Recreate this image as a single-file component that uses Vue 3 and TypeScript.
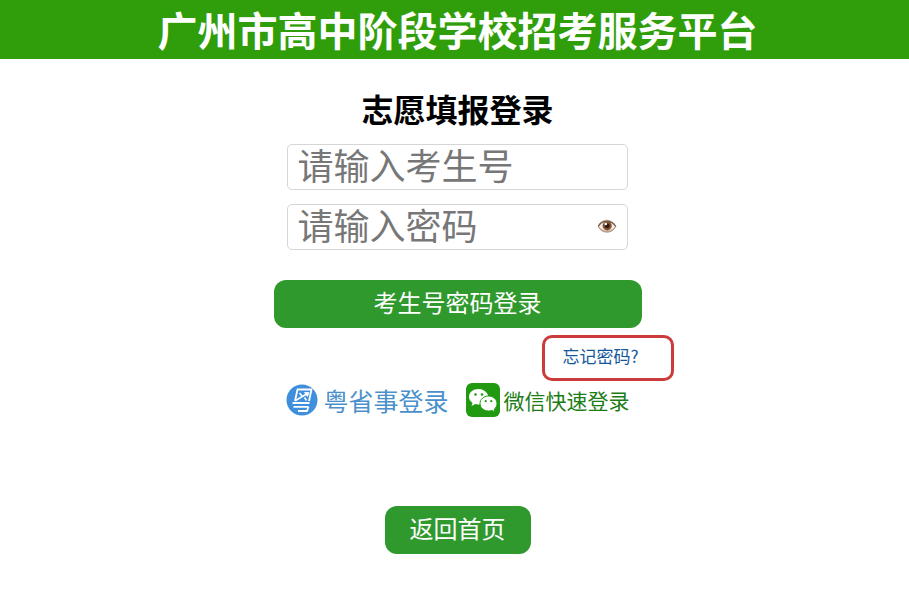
<script setup lang="ts">
import { ref } from 'vue'

const candidateNo = ref<string>('')
const password = ref<string>('')
const showPassword = ref<boolean>(false)

function togglePassword(): void {
  showPassword.value = !showPassword.value
}
</script>

<template>
  <div class="page">
    <header class="banner">
      <h1 class="banner-title">广州市高中阶段学校招考服务平台</h1>
    </header>

    <main class="content">
      <h2 class="form-title">志愿填报登录</h2>
      <form class="login" @submit.prevent>
        <div class="fields">
          <div class="field">
            <input
              v-model="candidateNo"
              class="field-input"
              type="text"
              placeholder="请输入考生号"
              aria-label="考生号"
            />
          </div>
          <div class="field">
            <input
              v-model="password"
              class="field-input"
              :type="showPassword ? 'text' : 'password'"
              placeholder="请输入密码"
              aria-label="密码"
            />
            <button class="eye" type="button" aria-label="显示密码" @click="togglePassword">
              <svg viewBox="0 0 20 16" width="20" height="16" aria-hidden="true">
                <path d="M.8 8.500C4 -.5 15 -.5 19.200 8.500C15 16.800 5 16.800 .8 8.500Z" fill="#d3b79f" />
                <path d="M2 8.700C5 3 14.500 2.500 18 8.700C14 13.800 6 13.800 2 8.700Z" fill="#f4efe8" />
                <circle cx="10.200" cy="7.800" r="4.600" fill="#84502f" />
                <circle cx="10.200" cy="7.800" r="2.400" fill="#2a1812" />
                <circle cx="8.800" cy="6" r="1.300" fill="#fff" />
                <path d="M1.200 8.500C4.500 1.500 14.500 1 18.800 8.500" fill="none" stroke="#6e5b52" stroke-width="1.200" />
                <path d="M1.200 8.500C5 15.800 15 15.800 18.800 8.500" fill="none" stroke="#a58c78" stroke-width=".8" />
              </svg>
            </button>
          </div>
        </div>

        <button class="btn btn-submit" type="submit">考生号密码登录</button>
        <a class="forgot" href="#forgot">忘记密码?</a>

        <nav class="other" aria-label="其他登录方式">
          <a class="other-link yss" href="#yss">
            <svg viewBox="0 0 32 32" width="32" height="32" aria-hidden="true">
              <circle cx="16" cy="16" r="15.500" fill="#3f8fdc" />
              <g fill="none" stroke="#fff" stroke-width="1.800" stroke-linejoin="round">
                <path d="M9 17L11.500 5.500H25.500L23 17" />
                <path d="M9.500 16.500L21.500 9.500M13.500 9L16 12M18.500 13.500L20.500 16.500" stroke-width="1.500" />
                <path d="M18.500 8.500H23L21.500 12.500Z" fill="#fff" stroke-width=".8" />
                <path d="M6.500 19H23.500M7.500 22.800H22.500" />
                <path d="M22.500 22.800L21 27H12" />
              </g>
            </svg>
            <span>粤省事登录</span>
          </a>
          <a class="other-link wechat" href="#wechat">
            <svg viewBox="0 0 34 34" width="34" height="34" aria-hidden="true">
              <rect width="34" height="34" rx="6" fill="#219a12" />
              <path
                d="M12.500 6C7 6 3 9.500 3 13.800C3 16.300 4.300 18.400 6.500 19.900L5.500 23L9.200 21.100C10.500 21.500 12 21.600 13.500 21.500C21.500 21 23.500 15 21.500 11C20 8 16.500 6 12.500 6Z"
                fill="#fff"
              />
              <path
                d="M22.500 13C17.800 13 14 16.300 14 20.500C14 24.700 17.800 28 22.500 28C23.700 28 24.800 27.800 25.800 27.400L29 29L28.200 26.200C29.900 25 31 22.900 31 20.500C31 16.300 27.200 13 22.500 13Z"
                fill="#fff"
                stroke="#219a12"
              />
              <g fill="#219a12">
                <circle cx="9.500" cy="11.500" r="1.300" />
                <circle cx="16" cy="11.500" r="1.300" />
                <circle cx="19.700" cy="18.200" r="1.100" />
                <circle cx="25.300" cy="18.200" r="1.100" />
              </g>
            </svg>
            <span>微信快速登录</span>
          </a>
        </nav>
      </form>

      <button class="btn btn-home" type="button">返回首页</button>
    </main>
  </div>
</template>

<style>
body {
  background: #fff;
}
</style>

<style scoped>
.page {
  font-family: "Noto Sans CJK SC", sans-serif;
  color: #000;
}

.banner {
  display: flex;
  justify-content: center;
  background: #2f9e0a;
  padding: 0 0 1px 6px;
}

.banner-title {
  margin: 0;
  font-size: 40px;
  line-height: 58px;
  font-weight: 700;
  color: #fff;
}

.content {
  display: flex;
  flex-direction: column;
  align-items: center;
  padding: 27px 0 44px 6px;
}

.form-title {
  margin: 0;
  font-size: 32px;
  line-height: 44px;
  font-weight: 700;
}

.login {
  display: flex;
  flex-direction: column;
  width: 100%;
  max-width: 368px;
  padding-top: 14px;
}

.fields {
  display: flex;
  flex-direction: column;
  gap: 14px;
  padding: 0 14px 0 13px;
}

.field {
  display: flex;
  align-items: center;
  height: 46px;
  box-sizing: border-box;
  border: 1px solid #d6d6d6;
  border-radius: 5px;
  padding: 0 10px;
}

.field-input {
  flex: 1;
  min-width: 0;
  height: 44px;
  box-sizing: border-box;
  border: 0;
  padding: 0 0 6px;
  outline: 0;
  background: transparent;
  font-family: inherit;
  font-size: 36px;
  line-height: 38px;
  color: #222;
}

.field-input::placeholder {
  color: #777;
  opacity: 1;
}

.eye {
  display: flex;
  border: 0;
  padding: 0 0 2px;
  background: none;
  cursor: pointer;
}

.btn {
  height: 48px;
  border: 0;
  border-radius: 12px;
  padding: 0 25px 4px;
  background: #2f992d;
  color: #fff;
  font-family: inherit;
  font-size: 24px;
  line-height: 44px;
  cursor: pointer;
}

.btn-submit {
  margin-top: 30px;
}

.forgot {
  align-self: flex-end;
  box-sizing: border-box;
  width: 132px;
  height: 46px;
  margin: 7px -32px 0 0;
  border: 3px solid #cb3b3b;
  border-radius: 10px;
  padding-left: 18px;
  font-size: 17px;
  line-height: 36px;
  color: #14579b;
  text-decoration: none;
}

.other {
  display: flex;
  justify-content: space-between;
  padding: 2px 12px 0 12px;
}

.other-link {
  display: flex;
  align-items: center;
  text-decoration: none;
  white-space: nowrap;
}

.yss {
  gap: 6px;
  font-size: 25px;
  line-height: 34px;
  color: #4b90cb;
}

.wechat {
  gap: 4px;
  font-size: 21px;
  line-height: 34px;
  color: #1c7d15;
}

.btn-home {
  margin-top: 89px;
}
</style>
